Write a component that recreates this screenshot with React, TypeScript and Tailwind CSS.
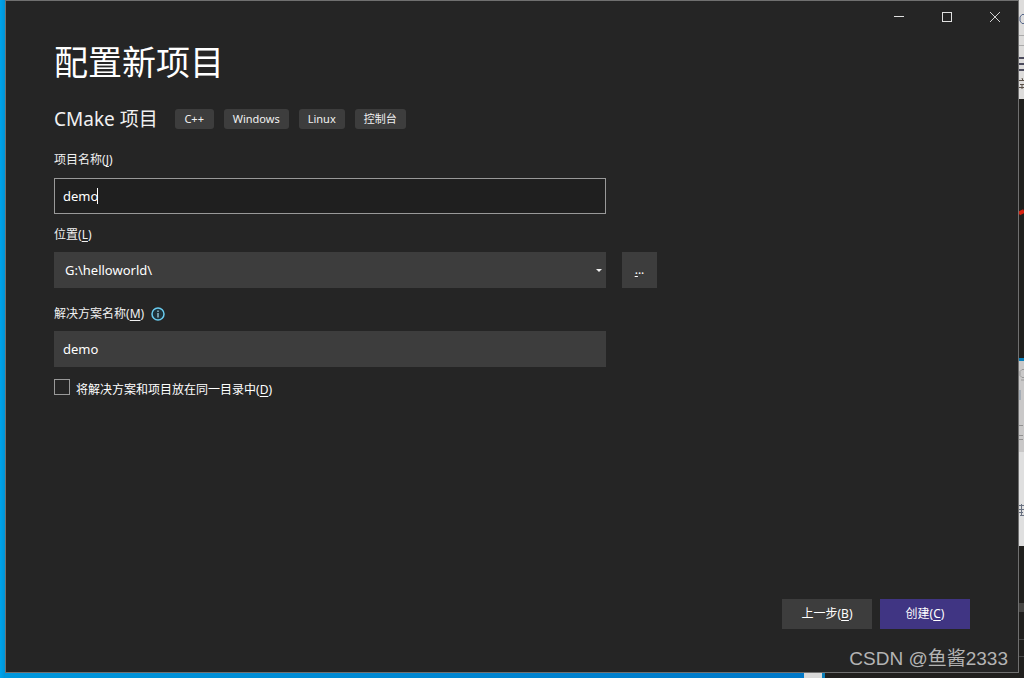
import { useState } from "react";

const tags = ["C++", "Windows", "Linux", "控制台"];

interface AccessTextProps {
  text: string;
  accessKey: string;
}

// Label text with its underlined access key: 位置(L)
function AccessText({ text, accessKey }: AccessTextProps) {
  return (
    <>
      {text}(<span className="underline underline-offset-2">{accessKey}</span>)
    </>
  );
}

function CaptionButtons() {
  return (
    <div className="flex justify-end h-8 -mr-px">
      <button type="button" aria-label="最小化" className="w-12 flex items-center justify-center">
        <svg width="10" height="10" viewBox="0 0 10 10" shapeRendering="crispEdges">
          <path d="M0 4.5h10" stroke="#e0e0e0" />
        </svg>
      </button>
      <button type="button" aria-label="最大化" className="w-12 flex items-center justify-center">
        <svg width="10" height="10" viewBox="0 0 10 10" shapeRendering="crispEdges">
          <rect x="0.5" y="0.5" width="9" height="9" fill="none" stroke="#e0e0e0" />
        </svg>
      </button>
      <button type="button" aria-label="关闭" className="w-12 flex items-center justify-center">
        <svg width="10" height="10" viewBox="0 0 10 10">
          <path d="M0 0l10 10M10 0L0 10" stroke="#d0d0d0" />
        </svg>
      </button>
    </div>
  );
}

function InfoIcon() {
  return (
    <svg width="14" height="14" viewBox="0 0 14 14" fill="none">
      <circle cx="7" cy="7" r="6" fill="#1d323a" stroke="#69cbee" strokeWidth="1.5" />
      <path d="M7 6v4.5M7 3.5V5" stroke="#8fb9c9" strokeWidth="1.5" />
    </svg>
  );
}

// Sliver of the windows that show behind the dialog
function RightSliver() {
  return (
    <div className="w-[5px] shrink-0 bg-[#201f1d]" aria-hidden="true">
      <svg className="block w-full" viewBox="0 0 5 678">
        <rect width="5" height="99" fill="#dddcdb" />
        <path d="M5 14.5H3L1 17v4l2 2.500h2" fill="none" stroke="#56678a" />
        <path d="M0 35.500h5M0 45.500h5" stroke="#aaa" />
        <path d="M0 58h5M0 64h5M0 70h5" stroke="#4b4a5c" strokeWidth="2" />
        <path d="M0 80.500h5M1 84.500h4M0 87.500h5M3 78l1 3M3 84v5" fill="none" stroke="#5b5148" />
        <path d="M0 213.500L5 211" stroke="#d9210f" strokeWidth="4" />
        <rect y="358" width="5" height="3" fill="#0a80ba" />
        <rect y="361" width="5" height="91" fill="#c9c8c8" />
        <path d="M5 369.500H3l-2 2v4l2 2h2M5 380H2" fill="none" stroke="#999" />
        <rect y="390" width="2" height="10" fill="#a5adb6" />
        <path d="M0 425.500h4M0 435.500h4M0 439.500h4" stroke="#929292" />
        <rect y="452" width="5" height="94" fill="#dfdfdf" />
        <path d="M0 505.500h5M0 509.500h5M0 512.500h4M1 515.500h4M2.500 504v12" stroke="#687080" />
        <rect y="603" width="5" height="9" fill="#454442" />
        <path d="M0 639.500h5M0 656.500h5" stroke="#444" />
      </svg>
    </div>
  );
}

export default function App() {
  const [name, setName] = useState("demo");
  const [solution, setSolution] = useState("demo");

  return (
    <div className="min-h-screen flex overflow-hidden bg-[#009fe6] text-[12px] leading-4 text-[#f1f1f1] font-['Noto_Sans','Noto_Sans_CJK_SC',sans-serif]">
      <div className="w-[5px] shrink-0 bg-linear-to-r from-[#00a3ec] to-[#0095d8]" />

      <div className="flex-1 min-w-0 flex flex-col">
        <main className="relative flex-1 flex flex-col bg-[#252525] border border-[#707070]">
          <CaptionButtons />

          <div className="flex-1 flex flex-col px-12 pb-[43px]">
            <h1 className="mt-1 text-[34px] leading-[50px] text-white">配置新项目</h1>

            <div className="mt-5 flex items-center">
              <h2 className="text-[19px] leading-6">CMake 项目</h2>
              <ul className="ml-[17px] flex gap-[10px]">
                {tags.map((tag) => (
                  <li
                    key={tag}
                    className="min-w-[39px] h-5 px-[9px] rounded-[3px] bg-[#3d3d3d] text-[11px] leading-5 text-center"
                  >
                    {tag}
                  </li>
                ))}
              </ul>
            </div>

            <form className="flex-1 flex flex-col" onSubmit={(e) => e.preventDefault()}>
              <label htmlFor="name" className="mt-[21px]">
                <AccessText text="项目名称" accessKey="J" />
              </label>
              <div className="relative mt-[10px] w-[552px]">
                <input
                  id="name"
                  value={name}
                  onChange={(e) => setName(e.target.value)}
                  className="block w-full h-9 px-2 pb-px bg-[#1f1f1f] border border-[#999999] text-[13px] text-white outline-none"
                />
                <span className="absolute left-[43px] top-[10px] w-px h-4 bg-white" />
              </div>

              <label htmlFor="location" className="mt-[13px]">
                <AccessText text="位置" accessKey="L" />
              </label>
              <div className="mt-[9px] flex gap-4">
                <div className="relative w-[552px]">
                  <select
                    id="location"
                    className="block w-full h-9 pl-[11px] pr-6 pb-px appearance-none bg-[#3d3d3d] text-[13px] text-white outline-none"
                  >
                    <option>G:\helloworld\</option>
                  </select>
                  <svg className="absolute right-1 top-[17px] pointer-events-none" width="6" height="3" viewBox="0 0 6 3">
                    <path d="M0 0h6L3 3z" fill="#f1f1f1" />
                  </svg>
                </div>
                <button type="button" aria-label="浏览" className="w-[35px] h-9 flex items-center justify-center bg-[#3d3d3d] text-white">
                  <span><span className="underline underline-offset-2">.</span>..</span>
                </button>
              </div>

              <div className="mt-[18px] flex items-center gap-[7px]">
                <label htmlFor="solution">
                  <AccessText text="解决方案名称" accessKey="M" />
                </label>
                <InfoIcon />
              </div>
              <input
                id="solution"
                value={solution}
                onChange={(e) => setSolution(e.target.value)}
                className="mt-[9px] w-[552px] h-9 px-[9px] pb-px bg-[#3d3d3d] text-[13px] text-white outline-none"
              />

              <div className="mt-3 flex items-start gap-[6px]">
                <input
                  id="same"
                  type="checkbox"
                  className="size-4 appearance-none border border-[#999999] bg-[#252525] checked:bg-[#403583]"
                />
                <label htmlFor="same" className="pt-[3px] text-white">
                  <AccessText text="将解决方案和项目放在同一目录中" accessKey="D" />
                </label>
              </div>

              <div className="mt-auto flex justify-end gap-2 text-white">
                <button type="button" className="w-[90px] h-[30px] bg-[#3d3d3d]">
                  <AccessText text="上一步" accessKey="B" />
                </button>
                <button type="submit" className="w-[90px] h-[30px] bg-[#403583]">
                  <AccessText text="创建" accessKey="C" />
                </button>
              </div>
            </form>
          </div>

          <p className="absolute right-[10px] bottom-0 text-[19px] leading-[26px] text-[#b4b4b4] font-['Liberation_Sans','Noto_Sans_CJK_SC',sans-serif]">
            CSDN @鱼酱2333
          </p>
        </main>

        <div className="flex h-[5px] shrink-0">
          <div className="flex-1 bg-linear-to-r from-[#0097dc] to-[#0078c8]" />
          <div className="w-[18px] bg-[#d8d8d8]" />
          <div className="w-[3px] bg-[#0a80ba]" />
          <div className="w-[194px] bg-[#201f1d]" />
        </div>
      </div>

      <RightSliver />
    </div>
  );
}
